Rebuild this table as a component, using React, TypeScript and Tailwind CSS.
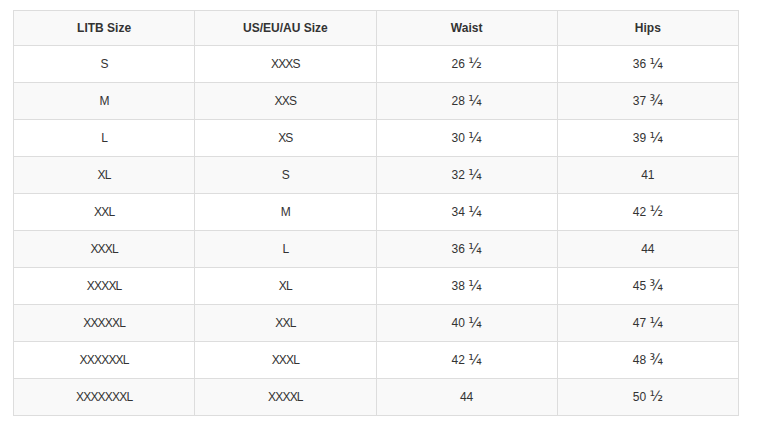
import React from 'react';

const rows: [string, string, string, string][] = [
  ['S', 'XXXS', '26 ½', '36 ¼'],
  ['M', 'XXS', '28 ¼', '37 ¾'],
  ['L', 'XS', '30 ¼', '39 ¼'],
  ['XL', 'S', '32 ¼', '41'],
  ['XXL', 'M', '34 ¼', '42 ½'],
  ['XXXL', 'L', '36 ¼', '44'],
  ['XXXXL', 'XL', '38 ¼', '45 ¾'],
  ['XXXXXL', 'XXL', '40 ¼', '47 ¼'],
  ['XXXXXXL', 'XXXL', '42 ¼', '48 ¾'],
  ['XXXXXXXL', 'XXXXL', '44', '50 ½'],
];

const headers = ['LITB Size', 'US/EU/AU Size', 'Waist', 'Hips'];

// fraction glyphs in the picture are larger than Arial's
function Measure({ value }: { value: string }) {
  const [whole, frac] = value.split(' ');
  return (
    <>
      {whole}
      {frac && (
        <>
          {' '}
          <span style={{ fontFamily: '"DejaVu Sans", sans-serif' }} className="text-[14px] leading-none">
            {frac}
          </span>
        </>
      )}
    </>
  );
}

export default function App() {
  return (
    <div className="w-[757px] h-[428px] bg-white pt-[10px] pl-[13px] font-['Liberation_Sans',Arial,sans-serif] text-[12px] text-[#333]">
      <table className="w-[726px] border-collapse table-fixed">
        <thead>
          <tr className="bg-[#f9f9f9]">
            {headers.map((h) => (
              <th key={h} className="h-[35px] border border-[#dddddd] font-bold text-center p-0">
                {h}
              </th>
            ))}
          </tr>
        </thead>
        <tbody>
          {rows.map((r, i) => (
            <tr key={r[0]} className={i % 2 === 1 ? 'bg-[#f9f9f9]' : 'bg-white'}>
              {r.map((c, j) => (
                <td
                  key={j}
                  className={`h-[37px] border border-[#dddddd] text-center p-0 ${j < 2 ? 'tracking-[-0.8px]' : ''}`}
                >
                  {j < 2 ? c : <Measure value={c} />}
                </td>
              ))}
            </tr>
          ))}
        </tbody>
      </table>
    </div>
  );
}
